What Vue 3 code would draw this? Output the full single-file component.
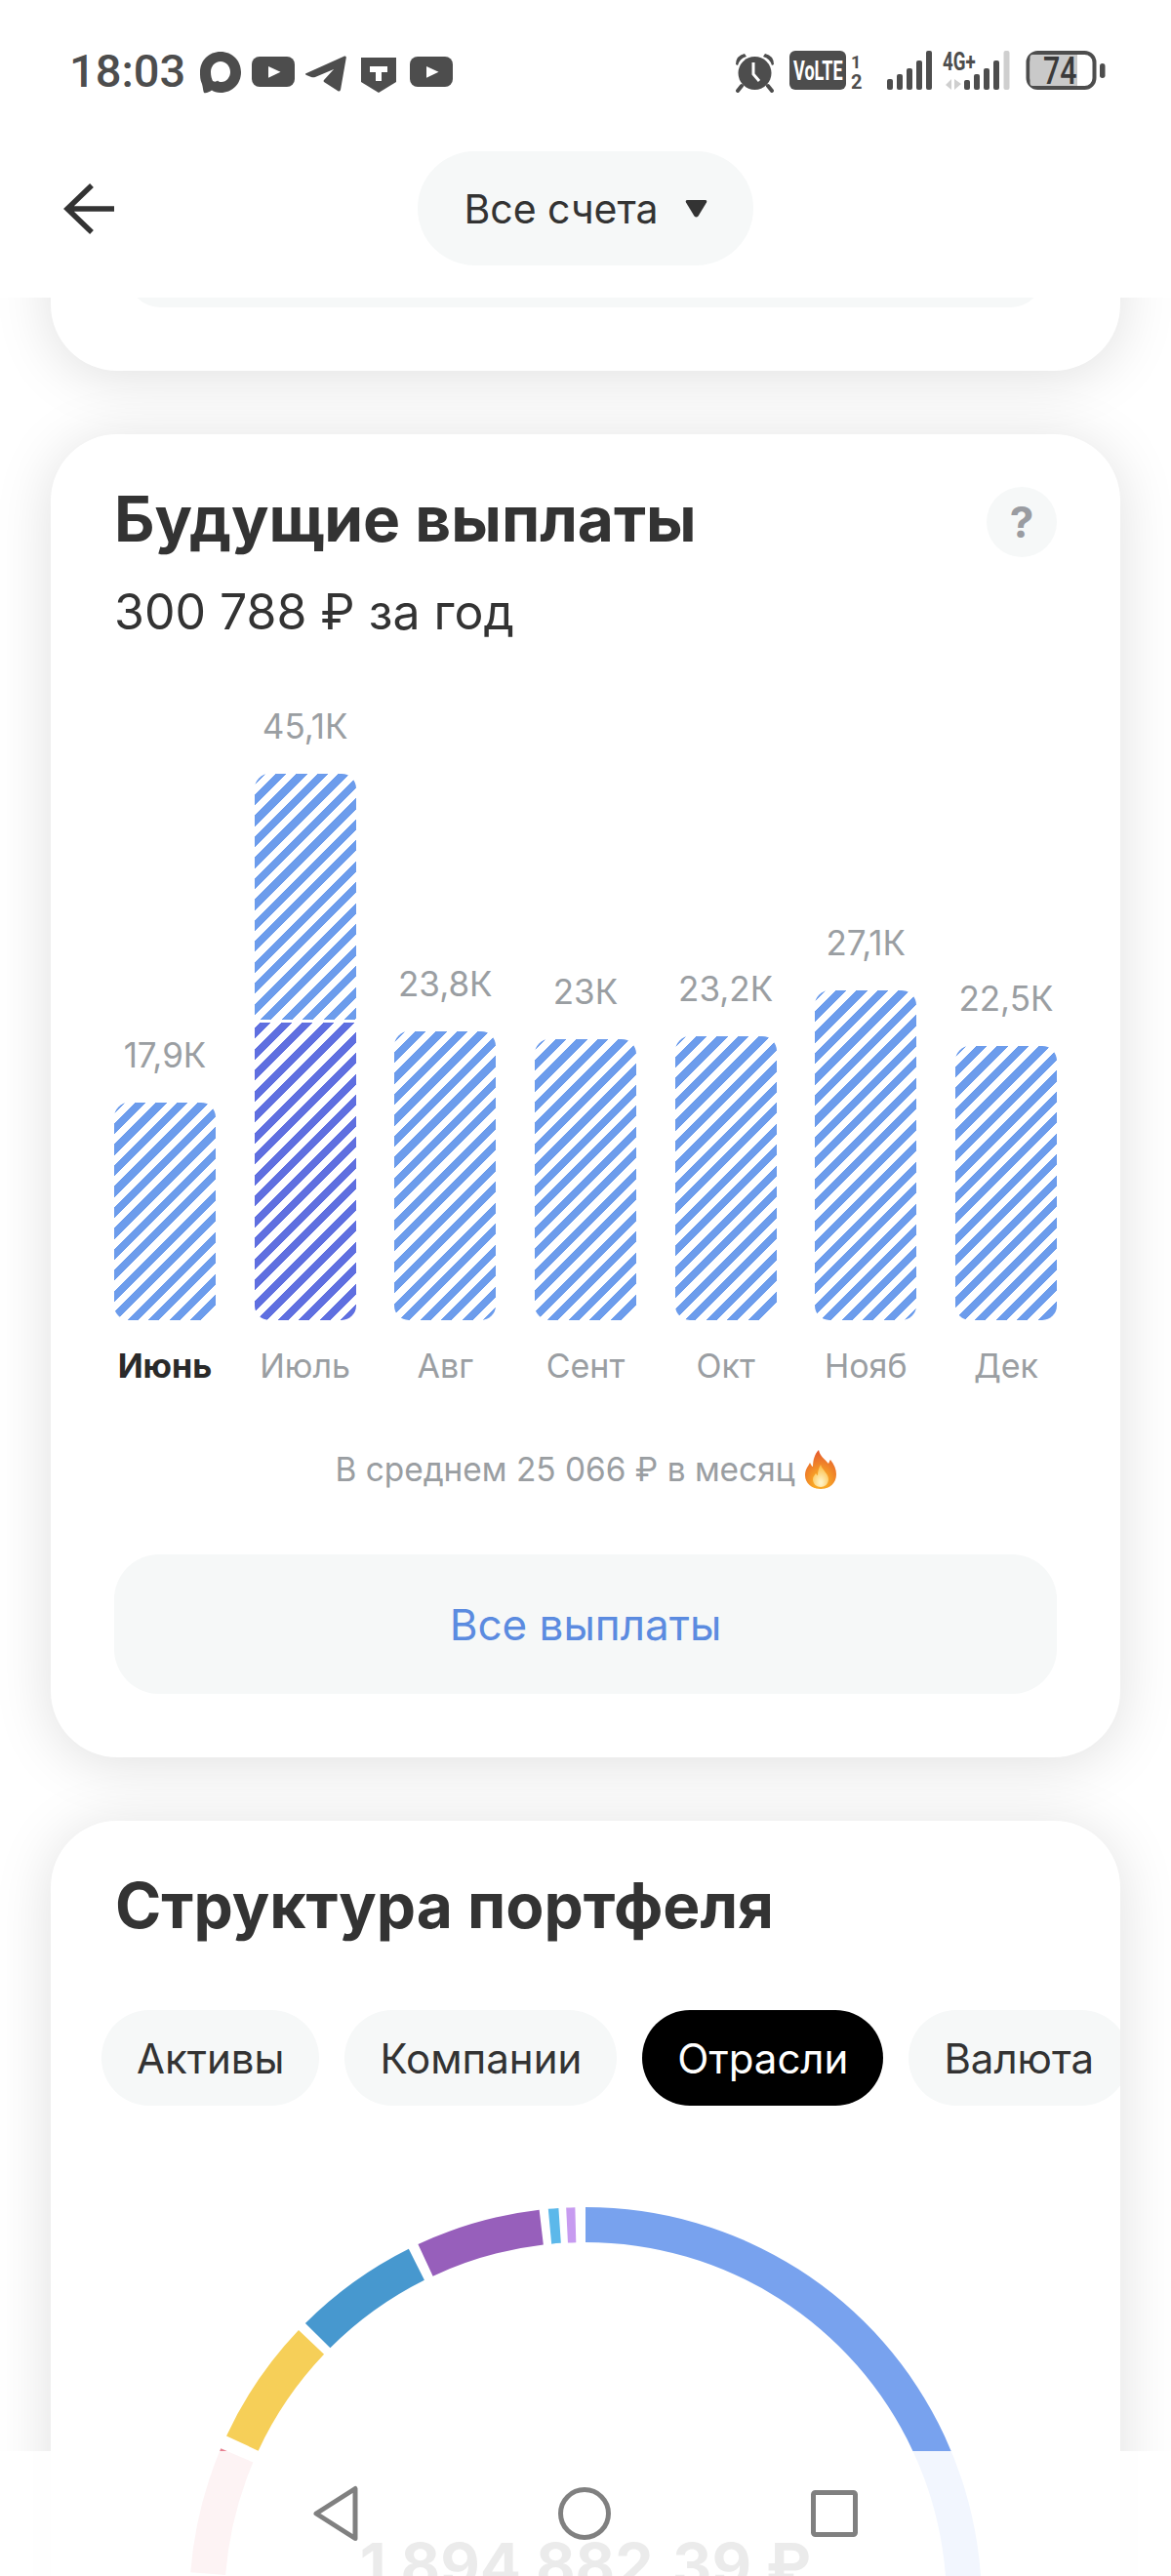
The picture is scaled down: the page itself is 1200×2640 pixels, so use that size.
<script setup>
const bars = [
  { value: '17,9К', month: 'Июнь', height: 223, active: true },
  { value: '45,1К', month: 'Июль', height: 560, dark: 305 },
  { value: '23,8К', month: 'Авг', height: 296 },
  { value: '23К', month: 'Сент', height: 288 },
  { value: '23,2К', month: 'Окт', height: 291 },
  { value: '27,1К', month: 'Нояб', height: 338 },
  { value: '22,5К', month: 'Дек', height: 281 }
]
const tabs = [
  { label: 'Активы' },
  { label: 'Компании' },
  { label: 'Отрасли', active: true },
  { label: 'Валюта' }
]

const R = 406
const r = 370
const c = 406
function pt(rad, deg) {
  const a = (deg * Math.PI) / 180
  return `${(c + rad * Math.sin(a)).toFixed(2)} ${(c - rad * Math.cos(a)).toFixed(2)}`
}
function arc(from, to) {
  const large = to - from > 180 ? 1 : 0
  return `M${pt(R, from)}A${R} ${R} 0 ${large} 1 ${pt(R, to)}L${pt(r, to)}A${r} ${r} 0 ${large} 0 ${pt(r, from)}Z`
}
const segments = [
  { color: '#78a2ee', from: 0, to: 130 },
  { color: '#c79bf0', from: -2.8, to: -1.5 },
  { color: '#5cb8ea', from: -5.4, to: -3.9 },
  { color: '#975fbb', from: -25, to: -6.7 },
  { color: '#4798cf', from: -45, to: -26.5 },
  { color: '#f6cf58', from: -65, to: -46.4 },
  { color: '#e68090', from: -85.5, to: -67 }
].map((s) => ({ color: s.color, d: arc(s.from, s.to) }))
</script>

<template>
  <div class="screen">
    <header class="header">
      <div class="status">
        <span class="time">18:03</span>
        <svg class="status-left" viewBox="205 50 260 46" width="260" height="46" fill="#4d4d4d">
          <g transform="translate(205 53)">
            <path fill-rule="evenodd" d="M21 0C33 0 42 9 42 21C42 33 33 42 21 42C17 42 14 41 12 39.5C10 41 6 43 4 42C3 40 3 36 2 33C0 29 0 25 0 21C0 9 9 0 21 0ZM21 10C15 10 11 15 11 21C11 25 12 28 13 30C15 31 17 31 18 29.5C19 30.5 20 31 22 31C27 31 31 26 31 21C31 15 27 10 21 10Z" />
          </g>
          <g transform="translate(258 58)">
            <rect width="44" height="31" rx="8" />
            <path d="M17 10L29.5 15.8L17 21.7Z" fill="#fff" />
          </g>
          <g transform="translate(313 57)">
            <path d="M0 18.5L40 .5Q42 0 41.8 2L36 35Q35 37.5 33 36L19 27Q18 26 19 25L29 14L10 22Q8 22.5 6 22L1 20Q-.5 19 0 18.5Z" />
          </g>
          <g transform="translate(370 59)">
            <path d="M0 0H36V25L18 36L0 25Z" />
            <path d="M9 9H27V15H21V24H15V15H9Z" fill="#fff" />
          </g>
          <g transform="translate(420 58)">
            <rect width="44" height="31" rx="8" />
            <path d="M17 10L29.5 15.8L17 21.7Z" fill="#fff" />
          </g>
        </svg>
        <svg class="status-right" viewBox="750 40 385 66" width="385" height="66" fill="#4d4d4d">
          <circle cx="773.5" cy="75" r="17" />
          <path d="M754 66Q754 57 763 55L765 58Q758 60 756 67ZM793 66Q793 57 784 55L782 58Q789 60 791 67Z" />
          <path d="M760 88L756 93M787 88L791 93" stroke="#4d4d4d" stroke-width="4" stroke-linecap="round" />
          <path d="M772 64V76L778 83" fill="none" stroke="#fff" stroke-width="3" />
          <rect x="809" y="52" width="58" height="40" rx="6" />
          <text transform="translate(813 82) scale(.645 1)" class="narrow" fill="#fff" font-size="28">VoLTE</text>
          <text x="872" y="70" class="narrow" font-size="18">1</text>
          <text x="872" y="91" class="narrow" font-size="20">2</text>
          <rect x="909" y="81" width="6" height="11" rx="2" />
          <rect x="919" y="76" width="6" height="16" rx="2" />
          <rect x="929" y="70" width="6" height="22" rx="2" />
          <rect x="939" y="62" width="6" height="30" rx="2" />
          <rect x="949" y="52" width="6" height="40" rx="2" />
          <text transform="translate(966 72) scale(.72 1)" class="narrow" font-size="26">4G+</text>
          <path d="M975 81V92L969 87ZM978 81V92L985 86Z" fill="#cfcfcf" />
          <rect x="988" y="82" width="6" height="10" rx="2" />
          <rect x="998" y="76" width="6" height="16" rx="2" />
          <rect x="1008" y="70" width="6" height="22" rx="2" />
          <rect x="1018" y="62" width="6" height="30" rx="2" />
          <rect x="1028.5" y="52" width="6" height="40" rx="2" fill="#cfcfcf" />
          <rect x="1053.5" y="54" width="68" height="36" rx="10" fill="none" stroke="#4d4d4d" stroke-width="4" />
          <path d="M1058 56H1104V88H1058Q1055.500 88 1055.500 85V59Q1055.500 56 1058 56Z" fill="#c9c9c9" />
          <text transform="translate(1069 86) scale(.8 1)" class="narrow battery" font-size="38">74</text>
          <rect x="1127" y="65" width="5.500" height="15" rx="2.700" />
        </svg>
      </div>
      <div class="topbar">
        <svg class="back" viewBox="0 0 52 52" width="52" height="52" fill="none" stroke="#333" stroke-width="5.500">
          <path d="M52 26H4M29 2L4 26L29 50" />
        </svg>
        <div class="account">
          <span>Все счета</span>
          <svg viewBox="0 0 23 18" width="23" height="18"><path d="M2.500 0H20.500Q23 0 22 2.500L13.500 16.500Q11.500 18.500 9.500 16.500L1 2.500Q0 0 2.500 0Z" fill="#333" /></svg>
        </div>
      </div>
    </header>

    <main class="content">
      <section class="card stub">
        <div class="stub-inner"></div>
      </section>

      <section class="card payouts">
        <div class="title-row">
          <h2 class="title">Будущие выплаты</h2>
          <span class="help">?</span>
        </div>
        <p class="subtitle">300 788 ₽ за год</p>

        <div class="chart">
          <div v-for="bar in bars" :key="bar.month" class="column">
            <span class="value">{{ bar.value }}</span>
            <div class="bar" :style="{ height: bar.height + 'px' }">
              <div class="stripe"></div>
              <div v-if="bar.dark" class="stripe dark" :style="{ flex: '0 0 ' + bar.dark + 'px' }"></div>
            </div>
            <span class="month" :class="{ current: bar.active }">{{ bar.month }}</span>
          </div>
        </div>

        <div class="average">
          <span>В среднем 25 066 ₽ в месяц</span>
          <svg viewBox="0 0 32 40" width="32" height="40">
            <defs>
              <radialGradient id="flameOuter" cx="50%" cy="85%" r="85%">
                <stop offset="0.25" stop-color="#f9a825" />
                <stop offset="1" stop-color="#e4572e" />
              </radialGradient>
              <radialGradient id="flameInner" cx="50%" cy="80%" r="70%">
                <stop offset="0.1" stop-color="#fff3c4" />
                <stop offset="1" stop-color="#fbc04d" />
              </radialGradient>
            </defs>
            <path d="M14 0C15 6 20 9 24 14C25 12 25 11 26 10C30 15 32 20 32 25C32 34 25 40 16 40C7 40 0 34 0 26C0 20 3 17 5 13C6 15 7 17 8 17C8 10 10 4 14 0Z" fill="url(#flameOuter)" />
            <path d="M16 15C17 20 24 24 24 30C24 35 20 38 16 38C12 38 8 35 8 30C8 27 10 26 11 24C12 25 12 26 13 26C13 22 14 18 16 15Z" fill="url(#flameInner)" />
          </svg>
        </div>

        <div class="all-button">Все выплаты</div>
      </section>

      <section class="card structure">
        <h2 class="title">Структура портфеля</h2>
        <div class="tabs">
          <span v-for="tab in tabs" :key="tab.label" class="tab" :class="{ active: tab.active }">{{ tab.label }}</span>
        </div>
        <div class="donut">
          <svg viewBox="0 0 812 812" width="812" height="812">
            <path v-for="s in segments" :key="s.color" :d="s.d" :fill="s.color" />
          </svg>
          <div class="total">1 894 882,39 ₽</div>
        </div>
      </section>
    </main>

    <nav class="nav">
      <svg viewBox="0 0 46 58" width="46" height="58" fill="none" stroke="#808080" stroke-width="5" stroke-linejoin="round">
        <path d="M43 3.500V54.500L3 29Z" />
      </svg>
      <svg viewBox="0 0 54 54" width="54" height="54" fill="none" stroke="#808080" stroke-width="5">
        <circle cx="27" cy="27" r="24.500" />
      </svg>
      <svg viewBox="0 0 48 48" width="48" height="48" fill="none" stroke="#808080" stroke-width="5" stroke-linejoin="round">
        <rect x="2.500" y="2.500" width="43" height="43" rx="2" />
      </svg>
    </nav>
  </div>
</template>

<style scoped>
.screen {
  position: relative;
  width: 1200px;
  height: 2640px;
  overflow: hidden;
  background: #fff;
  color: #333;
  font-family: Inter, "Noto Sans", sans-serif;
}
.header {
  position: absolute;
  top: 0;
  left: 0;
  right: 0;
  z-index: 2;
  height: 305px;
  background: #fff;
}
.status {
  display: flex;
  align-items: center;
  height: 46px;
  padding: 50px 65px 0 71px;
}
.time {
  width: 134px;
  font-family: Roboto, sans-serif;
  font-size: 47px;
  font-weight: 500;
  line-height: 46px;
  color: #4d4d4d;
}
.status-right {
  margin-left: auto;
}
.narrow {
  font-family: Roboto, sans-serif;
  font-weight: 700;
}
.battery {
  font-weight: 500;
  fill: #3a3a3a;
}
.topbar {
  position: relative;
  display: flex;
  justify-content: center;
  margin-top: 59px;
}
.back {
  position: absolute;
  left: 65px;
  top: 33px;
}
.account {
  display: flex;
  align-items: center;
  gap: 27px;
  height: 117px;
  padding: 0 47px;
  border-radius: 59px;
  background: #f6f8f8;
  font-size: 41px;
}
.content {
  display: flex;
  flex-direction: column;
  gap: 65px;
  padding: 200px 52px 0;
}
.card {
  border-radius: 68px;
  background: #fff;
  box-shadow: 0 6px 60px rgba(0, 0, 0, 0.13);
}
.stub {
  height: 180px;
  padding: 0 80px;
}
.stub-inner {
  height: 115px;
  border-radius: 0 0 32px 32px;
  background: #f6f8f8;
}
.payouts {
  padding: 52px 65px 65px;
}
.title-row {
  display: flex;
  justify-content: space-between;
  height: 70px;
}
.title {
  margin: 0;
  font-size: 64px;
  line-height: 70px;
  font-weight: 700;
  color: #333;
}
.help {
  display: flex;
  align-items: center;
  justify-content: center;
  width: 72px;
  height: 72px;
  margin-top: 2px;
  border-radius: 50%;
  background: #f6f8f8;
  color: #9a9ca1;
  font-size: 44px;
  font-weight: 700;
}
.subtitle {
  margin: 28px 0 0;
  font-size: 50px;
  line-height: 64px;
}
.chart {
  display: flex;
  justify-content: space-between;
  align-items: flex-end;
  margin-top: 63px;
}
.column {
  display: flex;
  flex-direction: column;
  align-items: center;
  width: 104px;
}
.value,
.month {
  font-size: 34px;
  line-height: 44px;
  color: #9a9ea2;
  white-space: nowrap;
}
.value {
  margin-bottom: 27px;
  font-size: 35px;
}
.month {
  margin-top: 25px;
}
.month.current {
  color: #2a2a2a;
  font-weight: 700;
}
.bar {
  display: flex;
  flex-direction: column;
  gap: 3px;
  width: 104px;
  border-radius: 15px;
  overflow: hidden;
}
.stripe {
  flex: 1;
  background: repeating-linear-gradient(135deg, #6c9cec 0 7.8px, transparent 7.8px 15.2px);
}
.stripe.dark {
  background: repeating-linear-gradient(135deg, transparent 0 4px, #5f6fe0 4px 11.8px, transparent 11.8px 15.2px);
}
.average {
  display: flex;
  align-items: center;
  justify-content: center;
  gap: 10px;
  height: 44px;
  margin-top: 62px;
  font-size: 33.4px;
  line-height: 44px;
  color: #9a9ea2;
}
.all-button {
  display: flex;
  align-items: center;
  justify-content: center;
  height: 143px;
  margin-top: 65px;
  border-radius: 46px;
  background: #f6f8f8;
  color: #5b8be0;
  font-size: 44px;
}
.structure {
  height: 1200px;
  padding-top: 52px;
}
.structure .title {
  padding-left: 66px;
}
.tabs {
  display: flex;
  gap: 26px;
  margin-top: 72px;
  padding-left: 52px;
  overflow: hidden;
}
.tab {
  flex: none;
  display: flex;
  align-items: center;
  height: 98px;
  padding: 0 36px;
  border-radius: 49px;
  background: #f6f8f8;
  font-size: 42px;
  color: #333;
}
.tab.active {
  background: #000;
  color: #fff;
}
.donut {
  position: relative;
  width: 812px;
  margin: 104px auto 0;
}
.donut svg {
  display: block;
}
.total {
  position: absolute;
  top: 331px;
  left: 0;
  right: 0;
  text-align: center;
  font-size: 62.500px;
  line-height: 70px;
  font-weight: 700;
  color: #333;
}
.nav {
  position: absolute;
  left: 0;
  right: 0;
  bottom: 0;
  z-index: 3;
  display: flex;
  justify-content: center;
  align-items: center;
  gap: 205px;
  height: 128px;
  background: rgba(255, 255, 255, 0.9);
}
</style>
